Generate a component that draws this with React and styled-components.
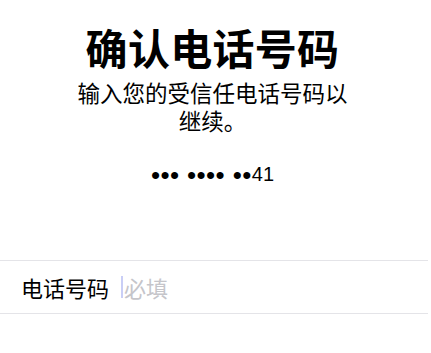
import React from 'react';
import styled, { createGlobalStyle } from 'styled-components';

const GlobalStyle = createGlobalStyle`
    html, body {
        margin: 0;
        padding: 0;
        background: #ffffff;
    }

    body {
        font-family: "Noto Sans CJK SC", "Noto Sans", sans-serif;
        color: #000000;
    }
`;

const Screen = styled.div`
    width: 431px;
    height: 353px;
    overflow: hidden;
    background: #ffffff;
`;

const Header = styled.div`
    display: flex;
    flex-direction: column;
    align-items: center;
    padding-top: 20px;
    padding-right: 6px;
`;

const Title = styled.h1`
    margin: 0;
    font-size: 42px;
    font-weight: 700;
    line-height: 54px;
    letter-spacing: 0.3px;
`;

const Subtitle = styled.p`
    margin: 4px 0 0;
    width: 290px;
    text-align: center;
    font-size: 22.5px;
    line-height: 28px;
    font-weight: 400;
`;

const MaskedNumber = styled.div`
    margin-top: 28px;
    font-family: "Liberation Sans", Arial, sans-serif;
    font-size: 20px;
    line-height: 24px;
    white-space: pre;
`;

const Dots = styled.span`
    font-size: 26px;
    letter-spacing: 0.4px;
    vertical-align: -3px;
    line-height: 0;
`;

const Form = styled.div`
    margin-top: 74px;
    margin-right: 3px;
    border-top: 1.5px solid #e4e4e8;
    border-bottom: 1.5px solid #e4e4e8;
`;

const Row = styled.label`
    display: flex;
    align-items: center;
    height: 52px;
    padding-left: 21px;
    gap: 12px;
`;

const Label = styled.span`
    font-size: 22px;
    line-height: 28px;
`;

const Field = styled.div`
    display: flex;
    align-items: center;
    gap: 1px;
`;

const Caret = styled.span`
    width: 2px;
    height: 22px;
    background: #c9cef6;
`;

const Placeholder = styled.span`
    font-size: 22px;
    line-height: 28px;
    color: #c5c5ca;
`;

function App() {
    return (
        <Screen>
            <GlobalStyle />
            <Header>
                <Title>确认电话号码</Title>
                <Subtitle>输入您的受信任电话号码以继续。</Subtitle>
                <MaskedNumber>
                    <Dots>••• •••• ••</Dots>41
                </MaskedNumber>
            </Header>
            <Form>
                <Row>
                    <Label>电话号码</Label>
                    <Field>
                        <Caret />
                        <Placeholder>必填</Placeholder>
                    </Field>
                </Row>
            </Form>
        </Screen>
    );
}

export default App;
